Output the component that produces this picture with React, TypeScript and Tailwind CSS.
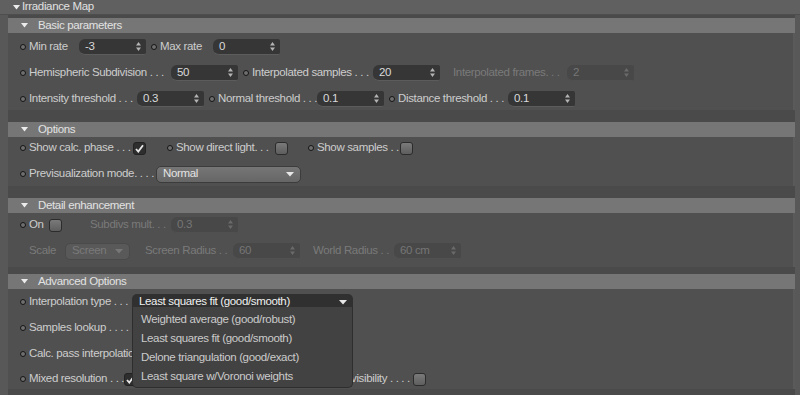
import React from 'react';

const font = { fontFamily: '"Liberation Sans", Arial, sans-serif' };

function Dot({ className = '' }: { className?: string }) {
  return <span className={`w-[6px] h-[6px] mr-[3px] rounded-full border border-[#151515] bg-[#6e6e6e] shrink-0 ${className}`} />;
}

function Arrows({ dim }: { dim?: boolean }) {
  const c = dim ? '#6a6a6a' : '#b4b4b4';
  return (
    <svg width="5" height="9" viewBox="0 0 5 9" className="shrink-0">
      <path d="M2.5 0 L5 3.5 L0 3.5 Z" fill={c} />
      <path d="M2.5 9 L5 5.5 L0 5.5 Z" fill={c} />
    </svg>
  );
}

function NumInput({ value, w = 'w-[67px]', dim }: { value: string; w?: string; dim?: boolean }) {
  return (
    <div
      className={`${w} h-[16px] shrink-0 flex items-center justify-between pl-[6px] pr-[5px] rounded-l-[6px] rounded-r-[2px] border-b ${
        dim ? 'bg-[#484848] text-[#767676] border-[#505050]' : 'bg-[#363636] text-[#dadada] border-[#5c5c5c]'
      }`}
    >
      <span className="leading-none">{value}</span>
      <Arrows dim={dim} />
    </div>
  );
}

function Check({ checked }: { checked?: boolean }) {
  if (checked)
    return (
      <span className="w-[13px] h-[13px] shrink-0 rounded-[3px] bg-[#2e2e2e] border border-[#222] flex items-center justify-center">
        <svg width="9" height="9" viewBox="0 0 9 9">
          <path d="M1 5 L3.3 7.6 L8 1.2" stroke="#e8e8e8" strokeWidth="1.8" fill="none" />
        </svg>
      </span>
    );
  return <span className="w-[13px] h-[13px] shrink-0 rounded-[3px] bg-gradient-to-b from-[#7a7a7a] to-[#5e5e5e] border border-[#2c2c2c]" />;
}

function Label({ text, w, dim }: { text: string; w: string; dim?: boolean }) {
  return <span className={`${w} shrink-0 whitespace-nowrap overflow-hidden ${dim ? 'text-[#7a7a7a]' : ''}`}>{text}</span>;
}

function Row({ children }: { children: React.ReactNode }) {
  return <div className="h-[18px] flex items-center pl-[12px]">{children}</div>;
}

function Section({ title, body, mt, children }: { title: string; body: string; mt: string; children: React.ReactNode }) {
  return (
    <div className={mt}>
      <div className="h-[15px] bg-[#767676] flex items-center text-[#e2e2e2]">
        <svg width="7" height="5" viewBox="0 0 7 5" className="ml-[13px] mr-[10px]">
          <path d="M0 0 L7 0 L3.5 4.5 Z" fill="#ececec" />
        </svg>
        <span>{title}</span>
      </div>
      <div className={`${body} bg-[#505050] border-r-2 border-[#5a5a5a] flex flex-col`}>{children}</div>
    </div>
  );
}

export default function App() {
  const menu = [
    'Weighted average (good/robust)',
    'Least squares fit (good/smooth)',
    'Delone triangulation (good/exact)',
    'Least square w/Voronoi weights',
  ];

  return (
    <div
      style={font}
      className="w-[800px] h-[395px] overflow-hidden bg-[#585858] text-[#cdcdcd] text-[11.5px] tracking-[-0.35px] relative"
    >
      {/* top header */}
      <div className="h-[15px] bg-[#606060] border-b border-[#4e4e4e] flex items-center text-[#e0e0e0]">
        <svg width="7" height="5" viewBox="0 0 7 5" className="ml-[13px] mr-[2px]">
          <path d="M0 0 L7 0 L3.5 4.5 Z" fill="#ececec" />
        </svg>
        <span>Irradiance Map</span>
      </div>

      <div className="ml-[8px] mr-[5px] bg-[#4a4a4a] pt-[3px] h-[380px]">
        <Section title="Basic parameters" mt="" body="h-[77px] pt-[5px] gap-[8px]">
          <Row>
            <Dot />
            <Label text="Min rate" w="w-[50px]" />
            <NumInput value="-3" />
            <Dot className="ml-[5px]" />
            <Label text="Max rate" w="w-[53px]" />
            <NumInput value="0" />
          </Row>
          <Row>
            <Dot />
            <Label text="Hemispheric Subdivision . . ." w="w-[142px]" />
            <NumInput value="50" />
            <Dot className="ml-[5px]" />
            <Label text="Interpolated samples . . ." w="w-[121px]" />
            <NumInput value="20" />
            <Label text="Interpolated frames. . ." w="w-[114px] ml-[13px]" dim />
            <NumInput value="2" dim />
          </Row>
          <Row>
            <Dot />
            <Label text="Intensity threshold . . ." w="w-[108px]" />
            <NumInput value="0.3" />
            <Dot className="ml-[5px]" />
            <Label text="Normal threshold . . ." w="w-[99px]" />
            <NumInput value="0.1" />
            <Dot className="ml-[5px]" />
            <Label text="Distance threshold . . ." w="w-[110px]" />
            <NumInput value="0.1" />
          </Row>
        </Section>

        <Section title="Options" mt="mt-[12px]" body="h-[49px] pt-[2px] gap-[8px]">
          <Row>
            <Dot />
            <Label text="Show calc. phase . . ." w="w-[104px]" />
            <Check checked />
            <Dot className="ml-[21px]" />
            <Label text="Show direct light. . ." w="w-[99px]" />
            <Check />
            <Dot className="ml-[20px]" />
            <Label text="Show samples . ." w="w-[83px]" />
            <Check />
          </Row>
          <Row>
            <Dot />
            <Label text="Previsualization mode. . . ." w="w-[127px]" />
            <div className="w-[145px] h-[17px] shrink-0 rounded-[5px] bg-gradient-to-b from-[#767676] to-[#666666] border border-[#3c3c3c] flex items-center justify-between pl-[6px] pr-[6px] text-[#e4e4e4]">
              <span>Normal</span>
              <svg width="8" height="5" viewBox="0 0 8 5">
                <path d="M0 0 L8 0 L4 4.5 Z" fill="#e8e8e8" />
              </svg>
            </div>
          </Row>
        </Section>

        <Section title="Detail enhancement" mt="mt-[12px]" body="h-[54px] pt-[3px] gap-[8px]">
          <Row>
            <Dot />
            <Label text="On" w="w-[20px]" />
            <Check />
            <Label text="Subdivs mult. . ." w="w-[81px] ml-[28px]" dim />
            <NumInput value="0.3" dim />
          </Row>
          <Row>
            <span className="w-[9px] shrink-0" />
            <Label text="Scale" w="w-[36px]" dim />
            <div className="w-[65px] h-[17px] shrink-0 rounded-[5px] bg-[#595959] border border-[#4a4a4a] flex items-center justify-between pl-[6px] pr-[6px] text-[#7a7a7a]">
              <span>Screen</span>
              <svg width="8" height="5" viewBox="0 0 8 5">
                <path d="M0 0 L8 0 L4 4.5 Z" fill="#777" />
              </svg>
            </div>
            <Label text="Screen Radius . ." w="w-[88px] ml-[15px]" dim />
            <NumInput value="60" dim />
            <Label text="World Radius . ." w="w-[81px] ml-[13px]" dim />
            <NumInput value="60 cm" dim />
          </Row>
        </Section>

        <Section title="Advanced Options" mt="mt-[7px]" body="h-[100px] pt-[4px] gap-[8px]">
          <Row>
            <Dot />
            <Label text="Interpolation type . . ." w="w-[103px]" />
            <div className="w-[221px] h-[17px] shrink-0 rounded-t-[5px] bg-[#303030] flex items-center justify-between pl-[7px] pr-[6px] text-[#f0f0f0]">
              <span>Least squares fit (good/smooth)</span>
              <svg width="8" height="5" viewBox="0 0 8 5">
                <path d="M0 0 L8 0 L4 4.5 Z" fill="#e8e8e8" />
              </svg>
            </div>
          </Row>
          <Row>
            <Dot />
            <Label text="Samples lookup . . . ." w="w-[103px]" />
          </Row>
          <Row>
            <Dot />
            <Label text="Calc. pass interpolation . . ." w="w-[130px]" />
          </Row>
          <div className="h-[18px] flex items-center pl-[12px] -mt-[1px]">
            <Dot />
            <Label text="Mixed resolution . . ." w="w-[95px]" />
            <Check checked />
            <span className="w-[214px] shrink-0" />
            <Label text="visibility . . . ." w="w-[62px]" />
            <Check />
          </div>
        </Section>
      </div>

      {/* open dropdown menu */}
      <div className="absolute left-[132px] top-[307px] w-[221px] h-[81px] bg-[#424242] border border-[#2e2e2e] border-t-0 rounded-b-[5px] pt-[3px] flex flex-col">
        {menu.map((m) => (
          <div key={m} className="h-[19px] flex items-center pl-[8px] text-[#cbcbcb]">
            {m}
          </div>
        ))}
      </div>
    </div>
  );
}
